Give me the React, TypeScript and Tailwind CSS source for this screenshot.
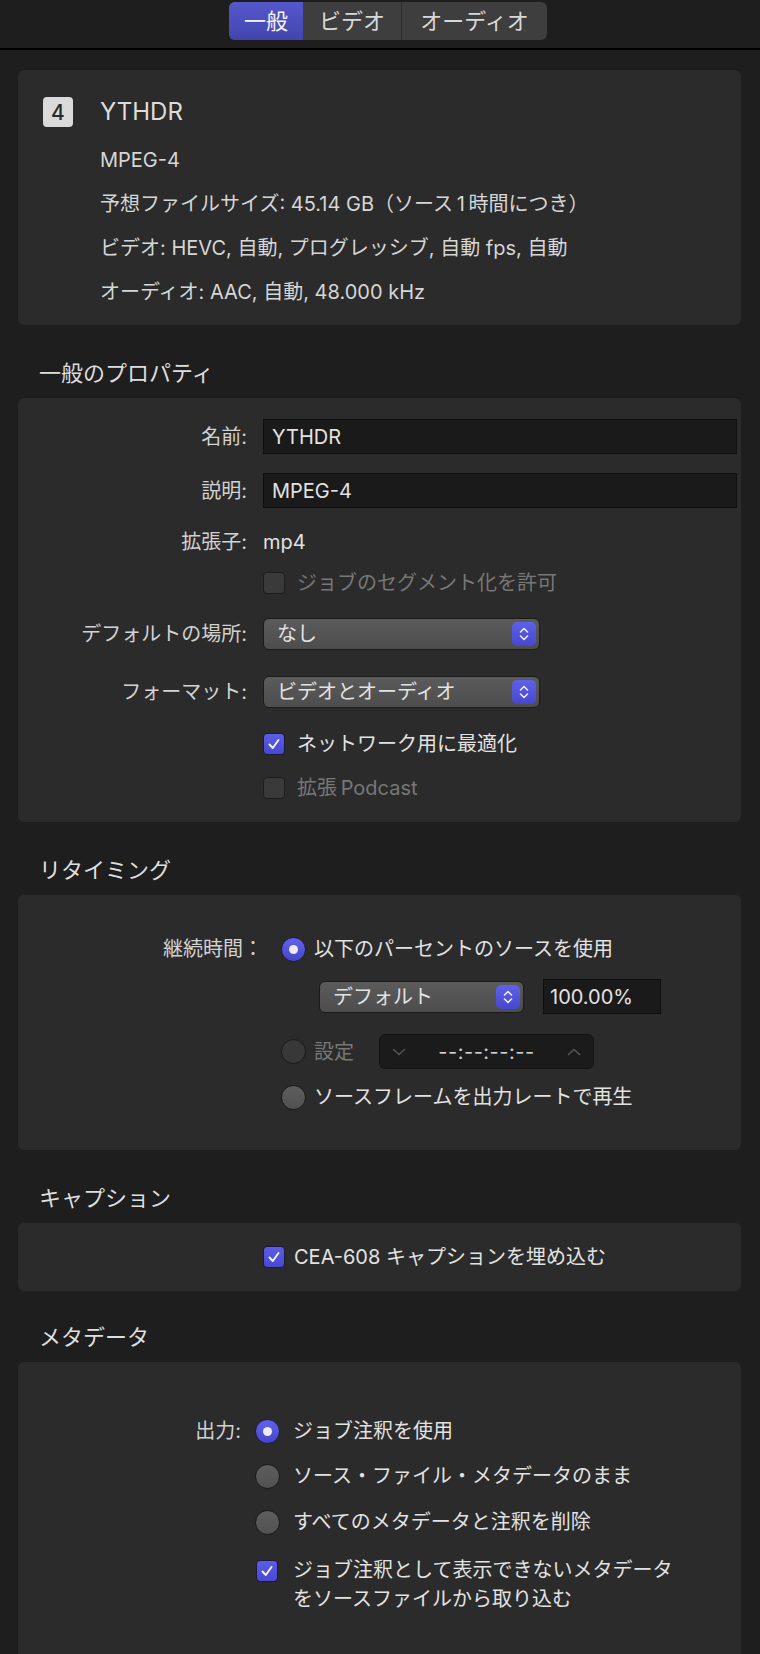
import React from 'react';

const labelText = 'text-[20px] leading-none text-[#d2d2d2]';
const valueText = 'text-[20px] leading-none text-[#e2e2e2]';

function Stepper() {
  return (
    <div className="ml-auto mr-[3px] flex h-[24px] w-[24px] items-center justify-center rounded-[5px] bg-linear-to-b from-[#6061ea] to-[#4647cc]">
      <svg width="14" height="18" viewBox="0 0 14 18" fill="none">
        <path d="M3.5 7 L7 3.5 L10.5 7" stroke="#ececff" strokeWidth="1.6" strokeLinecap="round" strokeLinejoin="round" />
        <path d="M3.5 11 L7 14.5 L10.5 11" stroke="#ececff" strokeWidth="1.6" strokeLinecap="round" strokeLinejoin="round" />
      </svg>
    </div>
  );
}

function Popup({ text, className }: { text: string; className: string }) {
  return (
    <div className={`flex h-[32px] items-center rounded-[6px] border border-[#1b1b1b] bg-linear-to-b from-[#5b5b5b] to-[#4d4d4d] pl-[13px] ${className}`}>
      <span className={valueText}>{text}</span>
      <Stepper />
    </div>
  );
}

function Checkbox({ checked, disabled }: { checked?: boolean; disabled?: boolean }) {
  if (checked) {
    return (
      <div className="flex h-[22px] w-[22px] shrink-0 items-center justify-center rounded-[4px] border border-[#1a1a3a] bg-linear-to-b from-[#5c5de6] to-[#4849cf]">
        <svg width="16" height="16" viewBox="0 0 16 16" fill="none">
          <path d="M3.5 8.5 L6.8 12 L12.5 4" stroke="#f4f4ff" strokeWidth="1.9" strokeLinecap="round" strokeLinejoin="round" />
        </svg>
      </div>
    );
  }
  return (
    <div
      className={`h-[22px] w-[22px] shrink-0 rounded-[4px] border border-[#1c1c1c] ${disabled ? 'bg-[#3a3a3a]' : 'bg-[#565656]'}`}
    />
  );
}

function Radio({ state }: { state: 'on' | 'off' | 'disabled' }) {
  if (state === 'on') {
    return (
      <div className="flex h-[25px] w-[25px] shrink-0 items-center justify-center rounded-full border border-[#1d1d44] bg-linear-to-b from-[#6263ec] to-[#4546c8]">
        <div className="h-[9px] w-[9px] rounded-full bg-[#ecebfa]" />
      </div>
    );
  }
  return (
    <div
      className={`h-[25px] w-[25px] shrink-0 rounded-full border border-[#1a1a1a] ${
        state === 'off' ? 'bg-linear-to-b from-[#5e5e5e] to-[#515151]' : 'bg-[#383838]'
      }`}
    />
  );
}

function Heading({ children, tight }: { children: React.ReactNode; tight?: boolean }) {
  return (
    <div
      className={`${tight ? 'mt-[31px]' : 'mt-[33px]'} mb-[10px] flex h-[30px] items-center pl-[21px] text-[22px] leading-none text-[#dedede]`}
    >
      {children}
    </div>
  );
}

export default function App() {
  return (
    <div className="h-[1654px] w-full overflow-hidden bg-[#1e1e1e] font-[Inter,'Noto_Sans_CJK_JP',sans-serif]">
      {/* tab bar */}
      <div className="h-[50px] border-b-2 border-black pl-[229px] pt-[2px]">
        <div className="flex h-[38px] w-[318px] overflow-hidden rounded-[6px] bg-[#3e3e3e] text-[22px] leading-none">
          <div className="flex w-[74px] items-center justify-center bg-linear-to-b from-[#5658cc] to-[#4345ad] text-[#f4f4f4]">
            一般
          </div>
          <div className="flex w-[99px] items-center justify-center border-r border-[#2e2e2e] text-[#d8d8d8]">
            ビデオ
          </div>
          <div className="flex flex-1 items-center justify-center text-[#d8d8d8]">オーディオ</div>
        </div>
      </div>

      <div className="ml-[18px] mr-[19px]">
        {/* summary */}
        <div className="mt-[20px] rounded-[6px] bg-[#2b2b2b] pt-[20px] pb-[11px]">
          <div className="flex h-[44px] items-center">
            <div className="ml-[25px] flex h-[30px] w-[30px] items-center justify-center rounded-[4px] bg-[#dadada] text-[21px] font-medium leading-none text-[#2b2b2b]">
              4
            </div>
            <span className="ml-[27px] text-[24px] leading-none text-[#dcdcdc]">YTHDR</span>
          </div>
          <div className="mt-[4px] pl-[82px] text-[20px] text-[#d6d6d6]">
            <div className="flex h-[44px] items-center">MPEG-4</div>
            <div className="flex h-[44px] items-center">予想ファイルサイズ: 45.14 GB（ソース{'\u2009'}1{'\u2009'}時間につき）</div>
            <div className="flex h-[44px] items-center">ビデオ: HEVC, 自動, プログレッシブ, 自動 fps, 自動</div>
            <div className="flex h-[44px] items-center">オーディオ: AAC, 自動, 48.000 kHz</div>
          </div>
        </div>

        <Heading>一般のプロパティ</Heading>
        <div className="rounded-[6px] bg-[#2b2b2b] pt-[21px] pb-[16px]">
          <div className="flex h-[35px] items-center">
            <div className={`w-[229px] text-right ${labelText}`}>名前:</div>
            <div className={`ml-[16px] mr-[4px] flex h-[35px] flex-1 items-center border border-[#0f0f0f] bg-[#1a1a1a] pl-[8px] ${valueText}`}>
              YTHDR
            </div>
          </div>
          <div className="mt-[19px] flex h-[35px] items-center">
            <div className={`w-[229px] text-right ${labelText}`}>説明:</div>
            <div className={`ml-[16px] mr-[4px] flex h-[35px] flex-1 items-center border border-[#0f0f0f] bg-[#1a1a1a] pl-[8px] ${valueText}`}>
              MPEG-4
            </div>
          </div>
          <div className="mt-[16px] flex h-[36px] items-center">
            <div className={`w-[229px] text-right ${labelText}`}>拡張子:</div>
            <div className={`ml-[16px] ${valueText}`}>mp4</div>
          </div>
          <div className="mt-[5px] flex h-[36px] items-center pl-[245px]">
            <Checkbox disabled />
            <span className="ml-[12px] text-[20px] leading-none text-[#777777]">ジョブのセグメント化を許可</span>
          </div>
          <div className="mt-[17px] flex h-[32px] items-center">
            <div className={`w-[229px] text-right ${labelText}`}>デフォルトの場所:</div>
            <Popup text="なし" className="ml-[16px] w-[277px]" />
          </div>
          <div className="mt-[26px] flex h-[32px] items-center">
            <div className={`w-[229px] text-right ${labelText}`}>フォーマット:</div>
            <Popup text="ビデオとオーディオ" className="ml-[16px] w-[277px]" />
          </div>
          <div className="mt-[18px] flex h-[36px] items-center pl-[245px]">
            <Checkbox checked />
            <span className={`ml-[12px] ${valueText}`}>ネットワーク用に最適化</span>
          </div>
          <div className="mt-[8px] flex h-[36px] items-center pl-[245px]">
            <Checkbox disabled />
            <span className="ml-[12px] text-[20px] leading-none text-[#777777]">拡張{'\u2009'}Podcast</span>
          </div>
        </div>

        <Heading>リタイミング</Heading>
        <div className="rounded-[6px] bg-[#2b2b2b] pt-[36px] pb-[35px]">
          <div className="flex h-[36px] items-center">
            <div className={`w-[245px] text-right ${labelText}`}>継続時間：</div>
            <div className="ml-[18px]">
              <Radio state="on" />
            </div>
            <span className={`ml-[8px] ${valueText}`}>以下のパーセントのソースを使用</span>
          </div>
          <div className="mt-[12px] flex h-[35px] items-center pl-[301px]">
            <Popup text="デフォルト" className="w-[205px]" />
            <div className={`ml-[19px] flex h-[35px] w-[118px] items-center border border-[#0f0f0f] bg-[#1a1a1a] pl-[6px] ${valueText}`}>
              100.00%
            </div>
          </div>
          <div className="mt-[20px] flex h-[35px] items-center pl-[263px]">
            <Radio state="disabled" />
            <span className="ml-[8px] w-[40px] text-[20px] leading-none text-[#777777]">設定</span>
            <div className="ml-[25px] flex h-[35px] w-[215px] items-center rounded-[6px] border border-[#141414] bg-[#1b1b1b] px-[12px]">
              <svg width="14" height="10" viewBox="0 0 14 10" fill="none">
                <path d="M1.5 2.5 L7 7.5 L12.5 2.5" stroke="#555555" strokeWidth="1.6" strokeLinecap="round" strokeLinejoin="round" />
              </svg>
              <span className="flex-1 text-center text-[20px] leading-none tracking-[0.5px] text-[#cfcfcf]">--:--:--:--</span>
              <svg width="14" height="10" viewBox="0 0 14 10" fill="none">
                <path d="M1.5 7.5 L7 2.5 L12.5 7.5" stroke="#555555" strokeWidth="1.6" strokeLinecap="round" strokeLinejoin="round" />
              </svg>
            </div>
          </div>
          <div className="mt-[10px] flex h-[36px] items-center pl-[263px]">
            <Radio state="off" />
            <span className={`ml-[8px] ${valueText}`}>ソースフレームを出力レートで再生</span>
          </div>
        </div>

        <Heading>キャプション</Heading>
        <div className="rounded-[6px] bg-[#2b2b2b] py-[16px]">
          <div className="flex h-[36px] items-center pl-[245px]">
            <Checkbox checked />
            <span className={`ml-[9px] ${valueText}`}>CEA-608 キャプションを埋め込む</span>
          </div>
        </div>

        <Heading tight>メタデータ</Heading>
        <div className="rounded-t-[6px] bg-[#2b2b2b] pt-[51px] pb-[40px]">
          <div className="flex h-[36px] items-center">
            <div className={`w-[223px] text-right ${labelText}`}>出力:</div>
            <div className="ml-[14px] w-[38px]">
              <Radio state="on" />
            </div>
            <span className={valueText}>ジョブ注釈を使用</span>
          </div>
          <div className="mt-[9px] flex h-[36px] items-center pl-[237px]">
            <div className="w-[38px]">
              <Radio state="off" />
            </div>
            <span className={valueText}>ソース・ファイル・メタデータのまま</span>
          </div>
          <div className="mt-[10px] flex h-[36px] items-center pl-[237px]">
            <div className="w-[38px]">
              <Radio state="off" />
            </div>
            <span className={valueText}>すべてのメタデータと注釈を削除</span>
          </div>
          <div className="mt-[16px] flex items-start pl-[238px]">
            <div className="mt-[4px] w-[37px]">
              <Checkbox checked />
            </div>
            <div className="text-[20px] leading-[29px] text-[#e2e2e2]">
              <div>ジョブ注釈として表示できないメタデータ</div>
              <div>をソースファイルから取り込む</div>
            </div>
          </div>
        </div>
      </div>
    </div>
  );
}
